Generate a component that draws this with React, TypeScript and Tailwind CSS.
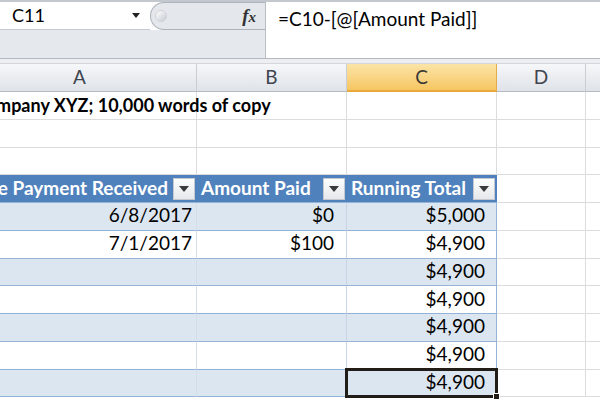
import React from 'react';

const font = { fontFamily: 'Lato, "Open Sans", sans-serif' };

const FilterButton = () => (
  <div className="w-[22px] h-[22px] bg-gradient-to-b from-[#fdfdfd] to-[#e6e8eb] border border-[#c4c9d1] flex items-center justify-center shrink-0">
    <div className="w-0 h-0 border-l-[5px] border-r-[5px] border-t-[6px] border-l-transparent border-r-transparent border-t-[#3b3b3b]" />
  </div>
);

const colHeader = (label: string, width: string, selected = false) => (
  <div
    className={`${width} h-full shrink-0 flex items-center justify-center text-[19px] border-r ${
      selected
        ? 'bg-gradient-to-b from-[#fbe4a6] to-[#f6c660] border-[#e2ac4c] border-b-2 border-b-[#e9a93b] text-[#3c3a35]'
        : 'bg-gradient-to-b from-[#f6f7f9] to-[#dfe3e8] border-[#c9ced5] border-b border-b-[#b4bac3] text-[#3f4550]'
    }`}
  >
    {label}
  </div>
);

const TableRow = ({ band, a, b, c, selected }: { band: boolean; a?: string; b?: string; c: string; selected?: boolean }) => {
  const bg = band ? 'bg-[#dce6f1]' : 'bg-white';
  return (
    <div className="flex h-[27.75px]">
      <div className={`w-[234px] shrink-0 ${bg} border-b border-b-[#95b3d7] border-r border-r-[#d6dde8] flex items-end justify-end pr-[4px] text-[19px] text-black`}>
        {a}
      </div>
      <div className={`w-[150px] shrink-0 ${bg} border-b border-b-[#95b3d7] border-r border-r-[#c7d4e6] flex items-end justify-end pr-[12px] text-[19px] text-black`}>
        {b}
      </div>
      <div className={`relative w-[150px] shrink-0 ${bg} border-b border-b-[#95b3d7] border-r border-r-[#95b3d7] flex items-end justify-end pr-[11px] text-[19px] text-black`}>
        {c}
        {selected && (
          <div className="absolute -left-[2px] -top-[2px] -right-[2px] -bottom-[2px] border-[3px] border-[#231d18]">
            <div className="absolute -right-[5px] -bottom-[5px] w-[7px] h-[7px] bg-[#231d18] border border-white" />
          </div>
        )}
      </div>
      <div className="w-[89px] shrink-0 border-b border-r border-[#dadcdd]" />
      <div className="w-[60px] shrink-0 border-b border-r border-[#dadcdd]" />
    </div>
  );
};

const PlainRow = ({ children }: { children?: React.ReactNode }) => (
  <div className="flex h-[27.75px]">
    <div className="w-[234px] shrink-0 border-b border-r border-[#dadcdd] relative">{children}</div>
    <div className="w-[150px] shrink-0 border-b border-r border-[#dadcdd]" />
    <div className="w-[150px] shrink-0 border-b border-r border-[#dadcdd]" />
    <div className="w-[89px] shrink-0 border-b border-r border-[#dadcdd]" />
    <div className="w-[60px] shrink-0 border-b border-r border-[#dadcdd]" />
  </div>
);

export default function App() {
  const rows = [
    { band: true, a: '6/8/2017', b: '$0', c: '$5,000' },
    { band: false, a: '7/1/2017', b: '$100', c: '$4,900' },
    { band: true, c: '$4,900' },
    { band: false, c: '$4,900' },
    { band: true, c: '$4,900' },
    { band: false, c: '$4,900' },
    { band: true, c: '$4,900', selected: true },
  ];

  return (
    <div className="w-[600px] h-[400px] overflow-hidden bg-white" style={font}>
      {/* Formula bar */}
      <div className="flex h-[59px] border-t-2 border-t-[#c3c8ce] border-b border-b-[#b3b9c1]">
        <div className="w-[266px] shrink-0 flex flex-col border-r border-r-[#b9bec5]">
          <div className="flex h-[28px] shrink-0">
            <div className="w-[150px] shrink-0 bg-white flex items-center pl-[12px] pr-[10px] justify-between text-[18px] text-black border-b border-b-[#c6cad0]">
              <span>C11</span>
              <div className="w-0 h-0 border-l-[4px] border-r-[4px] border-t-[5px] border-l-transparent border-r-transparent border-t-[#222]" />
            </div>
            <div className="flex-1 bg-[#e4e7eb] rounded-l-[14px] border border-r-0 border-[#aeb3ba] flex items-center justify-between pl-[4px] pr-[9px]">
              <div className="w-[12px] h-[12px] rounded-full bg-gradient-to-br from-[#ffffff] to-[#c6cbd2] border border-[#d0d4d9]" />
              <span className="text-[19px] italic font-bold text-[#333]" style={{ fontFamily: '"Liberation Serif", serif' }}>
                f<span className="text-[15px]">x</span>
              </span>
            </div>
          </div>
          <div className="flex-1 bg-[#e5e8ec]" />
        </div>
        <div className="flex-1 bg-white pl-[12px] pt-[3px] text-[19px] text-black">=C10-[@[Amount Paid]]</div>
      </div>
      <div className="h-[5px] bg-[#eceef1] border-b border-b-[#d3d6db]" />

      {/* Grid */}
      <div className="ml-[-37px]">
        <div className="flex h-[28px]">
          {colHeader('A', 'w-[234px]')}
          {colHeader('B', 'w-[150px]')}
          {colHeader('C', 'w-[150px]', true)}
          {colHeader('D', 'w-[89px]')}
          {colHeader('', 'w-[60px]')}
        </div>
        <PlainRow>
          <div className="absolute left-[11px] bottom-[0px] whitespace-nowrap font-bold text-[18px] text-black">
            Company XYZ; 10,000 words of copy
          </div>
        </PlainRow>
        <PlainRow />
        <PlainRow />
        {/* Table header */}
        <div className="flex h-[27.75px]">
          <div className="w-[234px] shrink-0 bg-[#4f81bd] flex items-center justify-between pl-[4px] pr-[2px] text-white font-bold text-[19px] whitespace-nowrap overflow-hidden border-b border-b-[#95b3d7]">
            <span>Date Payment Received</span>
            <FilterButton />
          </div>
          <div className="w-[150px] shrink-0 bg-[#4f81bd] flex items-center justify-between pl-[4px] pr-[2px] text-white font-bold text-[19px] whitespace-nowrap border-b border-b-[#95b3d7]">
            <span>Amount Paid</span>
            <FilterButton />
          </div>
          <div className="w-[150px] shrink-0 bg-[#4f81bd] flex items-center justify-between pl-[4px] pr-[2px] text-white font-bold text-[19px] whitespace-nowrap border-b border-b-[#95b3d7]">
            <span>Running Total</span>
            <FilterButton />
          </div>
          <div className="w-[89px] shrink-0 border-b border-r border-[#dadcdd]" />
          <div className="w-[60px] shrink-0 border-b border-r border-[#dadcdd]" />
        </div>
        {rows.map((r, i) => (
          <TableRow key={i} {...r} />
        ))}
      </div>
    </div>
  );
}
